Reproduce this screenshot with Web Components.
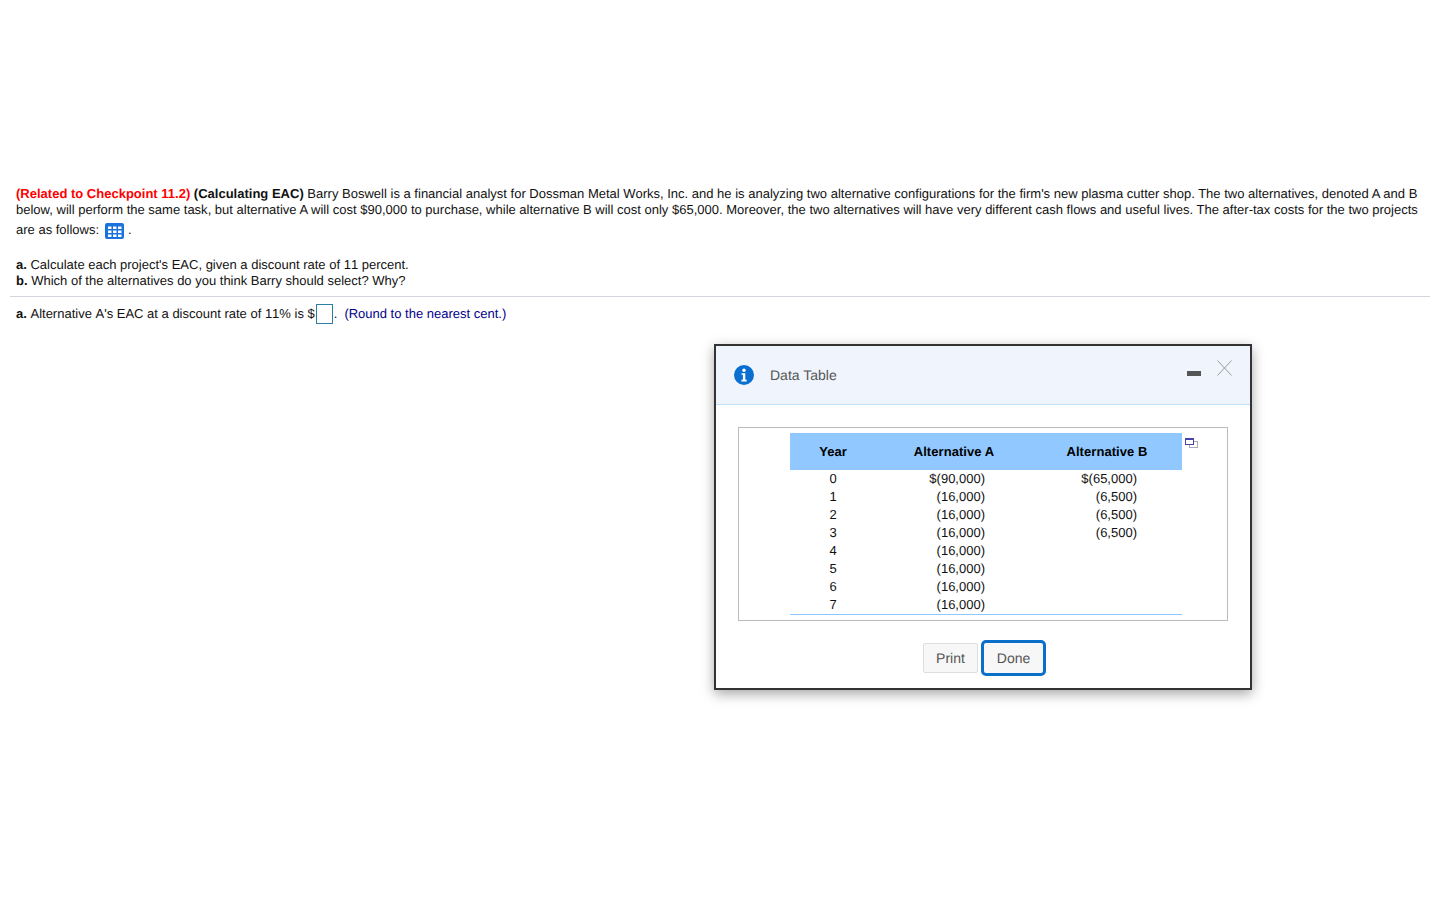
<!DOCTYPE html>
<html>
<head>
<meta charset="utf-8">
<title>Data Table</title>
<style>
html, body { margin: 0; background: #fff; }
body { font: 13px/16px "Liberation Sans", Arial, sans-serif; color: #111; height: 900px; overflow: hidden; text-rendering: geometricPrecision; }
</style>
</head>
<body>

<template id="t-question">
	<style>
		:host { display: block; padding: 186px 10px 0; }
		.text { padding: 0 6px; width: 1408px; }
		.intro { letter-spacing: .005px; }
		.last { height: 24px; display: flex; align-items: center; }
		.last svg { margin: 2px 4px 0 6px; }
		.parts { margin-top: 15px; font-kerning: none; }
		hr { border: 0; border-top: 1px solid #d3d6df; margin: 7px 0 0; }
		.answer { display: flex; align-items: center; height: 24px; padding: 5px 6px 0; font-kerning: none; }
		.answer .box { width: 15px; height: 18px; border: 1px solid #2b7ea8; margin: 0 1px 0 1px; }
		.answer .hint { color: #00008b; margin-left: 7px; }
	</style>
	<div class="text">
		<div class="intro"><slot name="intro"></slot></div>
		<div class="last"><slot name="last"></slot><svg width="19" height="16" viewBox="0 0 19 16"><rect width="19" height="16" rx="2" fill="#1a73dc"/><g fill="#fff"><rect x="3" y="3.500" width="3.500" height="2.500"/><rect x="8" y="3.500" width="3.500" height="2.500"/><rect x="13" y="3.500" width="3.500" height="2.500"/><rect x="3" y="7.500" width="3.500" height="2.500"/><rect x="8" y="7.500" width="3.500" height="2.500"/><rect x="13" y="7.500" width="3.500" height="2.500"/><rect x="3" y="11.500" width="3.500" height="2.500"/><rect x="8" y="11.500" width="3.500" height="2.500"/><rect x="13" y="11.500" width="3.500" height="2.500"/></g></svg><span>.</span></div>
		<div class="parts"><slot name="parts"></slot></div>
	</div>
	<hr>
	<div class="answer"><slot name="answer"></slot><span class="box"></span><span>.</span><span class="hint"><slot name="hint"></slot></span></div>
</template>

<template id="t-modal">
	<style>
		:host { display: block; position: absolute; left: 714px; top: 344px; width: 534px; height: 342px; border: 2px solid #333; background: #fff; box-shadow: 0 4px 12px rgba(0,0,0,.35); color: #111; }
		header { height: 58px; background: #f0f5fd; border-bottom: 1px solid #bde0ff; display: flex; align-items: center; padding: 0 18px; }
		h1 { margin: 0 0 0 16px; font: 14px/18px "Liberation Sans", Arial, sans-serif; color: #555; flex: 1; }
		.min { width: 14px; height: 5px; background: #555; margin: 0 16px 0 0; position: relative; top: -2px; }
		.close { position: relative; top: -7px; display: block; }
		main { padding: 22px 22px 0; }
		.frame { border: 1px solid #bbb; height: 187px; padding: 5px 0 0 51px; display: flex; align-items: flex-start; }
		.copy { margin: 5px 0 0 3px; }
		footer { display: flex; justify-content: center; gap: 3px; margin-top: 19px; padding-left: 3px; align-items: center; }
	</style>
	<header>
		<svg width="20" height="20" viewBox="0 0 20 20"><circle cx="10" cy="10" r="10" fill="#0a6fd0"/><circle cx="10" cy="5.2" r="1.7" fill="#fff"/><path d="M7.5 8.2h3.8v6.6h1.400v1.600H7.400v-1.600h1.500V9.800H7.500z" fill="#fff"/></svg>
		<h1><slot name="title"></slot></h1>
		<span class="min"></span>
		<svg class="close" width="15" height="16" viewBox="0 0 15 16"><path d="M.5.5l14 15M14.500.5l-14 15" stroke="#999" stroke-width="1" fill="none"/></svg>
	</header>
	<main>
		<div class="frame">
			<slot name="table"></slot>
			<svg class="copy" width="13" height="10" viewBox="0 0 13 10"><rect x="4.500" y="3.500" width="8" height="6" fill="#fff" stroke="#aab" stroke-width="1"/><rect x=".5" y=".5" width="8" height="6" fill="#fff" stroke="#44a" stroke-width="1"/><rect x="0" y="0" width="9" height="2" fill="#44a"/></svg>
		</div>
		<footer><slot name="actions"></slot></footer>
	</main>
</template>

<template id="t-table">
	<style>
		:host { display: block; width: 392px; }
		table { border-collapse: collapse; width: 392px; table-layout: fixed; font: 13px/18px "Liberation Sans", Arial, sans-serif; color: #111; border-bottom: 1px solid #8cc8ff; }
		th { background: #90c8ff; height: 37px; padding: 0; font-weight: bold; text-align: center; color: #000; letter-spacing: .06px; }
		td { height: 18px; padding: 0; }
		.y { text-align: center; }
		.a { text-align: right; padding-right: 47px; }
		.b { text-align: right; padding-right: 45px; }
	</style>
	<table>
		<colgroup><col style="width:86px"><col style="width:156px"><col style="width:150px"></colgroup>
		<thead><tr><th>Year</th><th>Alternative A</th><th>Alternative B</th></tr></thead>
		<tbody></tbody>
	</table>
</template>

<template id="t-button">
	<style>
		:host { display: inline-block; }
		button { font: 14px/16px "Liberation Sans", Arial, sans-serif; color: #555; background: #f7f7f7; border: 1px solid #ddd; border-radius: 2px; height: 30px; width: 55px; padding: 0; margin: 0; text-rendering: geometricPrecision; }
		:host([primary]) button { border: 3px solid #0a6fc8; border-radius: 5px; height: 36px; width: 65px; }
	</style>
	<button><slot></slot></button>
</template>

<script>
function shadowFrom(el, id) {
	el.attachShadow({mode: 'open'}).appendChild(document.getElementById(id).content.cloneNode(true))
}

customElements.define('eac-question', class extends HTMLElement {
	constructor() { super(); shadowFrom(this, 't-question') }
})

customElements.define('data-modal', class extends HTMLElement {
	constructor() { super(); shadowFrom(this, 't-modal') }
})

customElements.define('modal-button', class extends HTMLElement {
	constructor() { super(); shadowFrom(this, 't-button') }
})

const rows = [
	['0', '$(90,000)', '$(65,000)'],
	['1', '(16,000)', '(6,500)'],
	['2', '(16,000)', '(6,500)'],
	['3', '(16,000)', '(6,500)'],
	['4', '(16,000)', ''],
	['5', '(16,000)', ''],
	['6', '(16,000)', ''],
	['7', '(16,000)', '']
]

customElements.define('cash-table', class extends HTMLElement {
	constructor() {
		super()
		shadowFrom(this, 't-table')
		const body = this.shadowRoot.querySelector('tbody')
		rows.forEach((r) => {
			const tr = document.createElement('tr')
			r.forEach((v, i) => {
				const td = document.createElement('td')
				td.className = ['y', 'a', 'b'][i]
				td.textContent = v
				tr.appendChild(td)
			})
			body.appendChild(tr)
		})
	}
})
</script>

<eac-question>
	<div slot="intro"><span style="color:#f00;font-weight:bold">(Related to Checkpoint 11.2)</span> <b>(Calculating EAC)</b> Barry Boswell is a financial analyst for Dossman Metal Works, Inc. and he is analyzing two alternative configurations for the firm's new plasma cutter shop. The two alternatives, denoted A and B below, will perform the same task, but alternative A will cost $90,000 to purchase, while alternative B will cost only $65,000. Moreover, the two alternatives will have very different cash flows and useful lives. The after-tax costs for the two projects</div>
	<span slot="last">are as follows:</span>
	<div slot="parts"><b>a.</b> Calculate each project's EAC, given a discount rate of 11 percent.<br><b>b.</b> Which of the alternatives do you think Barry should select? Why?</div>
	<span slot="answer"><b>a.</b> Alternative A's EAC at a discount rate of 11% is $</span>
	<span slot="hint">(Round to the nearest cent.)</span>
</eac-question>

<data-modal>
	<span slot="title">Data Table</span>
	<cash-table slot="table"></cash-table>
	<modal-button slot="actions">Print</modal-button>
	<modal-button slot="actions" primary>Done</modal-button>
</data-modal>

</body>
</html>
